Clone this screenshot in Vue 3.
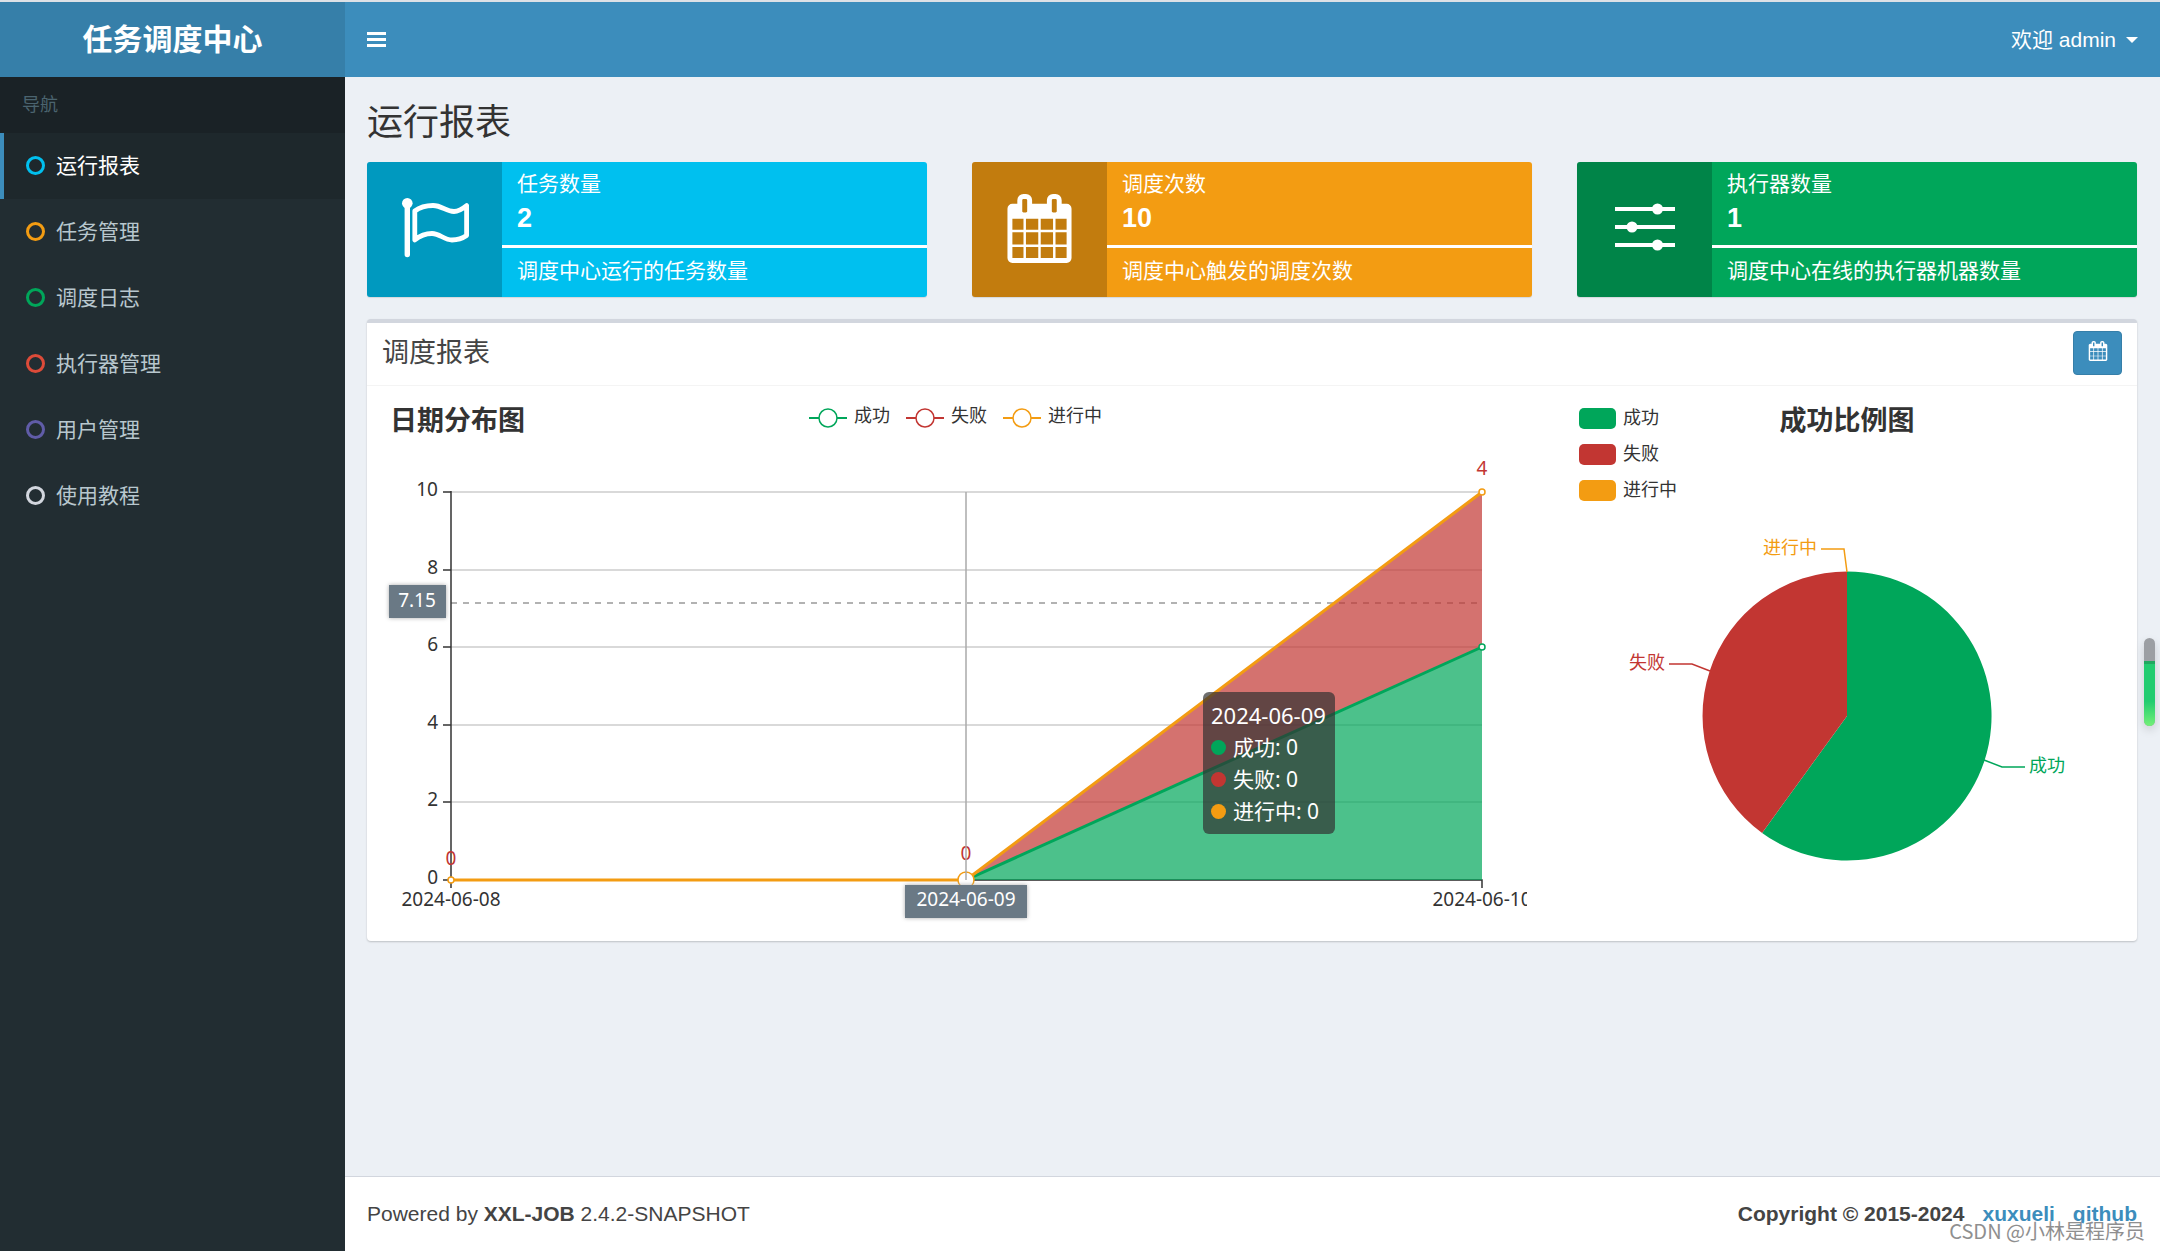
<script setup>
const menu = [
  { label: '运行报表', color: '#00c0ef', active: true },
  { label: '任务管理', color: '#f39c12' },
  { label: '调度日志', color: '#00a65a' },
  { label: '执行器管理', color: '#dd4b39' },
  { label: '用户管理', color: '#605ca8' },
  { label: '使用教程', color: '#d2d6de' },
]

const stats = [
  { kind: 'aqua', icon: 'flag', label: '任务数量', value: 2, note: '调度中心运行的任务数量' },
  { kind: 'yellow', icon: 'calendar', label: '调度次数', value: 10, note: '调度中心触发的调度次数' },
  { kind: 'green', icon: 'sliders', label: '执行器数量', value: 1, note: '调度中心在线的执行器机器数量' },
]

const series = [
  { name: '成功', color: '#00a65a', x: 427 },
  { name: '失败', color: '#c23632', x: 524 },
  { name: '进行中', color: '#f39c12', x: 621 },
]

const plot = { left: 69, mid: 584, right: 1100, top: 91, bottom: 479 }
const yOf = (v) => Math.round(plot.bottom - (v / 10) * (plot.bottom - plot.top))
const ticks = [0, 2, 4, 6, 8, 10]

const calendarPath =
  'M192 1664h288v-288h-288v288zm352 0h320v-288h-320v288zm-352-352h288v-320h-288v320zm352 0h320v-320h-320v320zm-352-384h288v-288h-288v288zm736 736h320v-288h-320v288zm-384-736h320v-288h-320v288zm768 736h288v-288h-288v288zm-384-352h320v-320h-320v320zm-352-864v-288q0-13-9.5-22.5t-22.5-9.5h-64q-13 0-22.5 9.5t-9.5 22.5v288q0 13 9.5 22.5t22.5 9.5h64q13 0 22.5-9.5t9.5-22.5zm736 864h288v-320h-288v320zm-384-384h320v-288h-320v288zm384 0h288v-288h-288v288zm32-480v-288q0-13-9.5-22.5t-22.5-9.5h-64q-13 0-22.5 9.5t-9.5 22.5v288q0 13 9.5 22.5t22.5 9.5h64q13 0 22.5-9.5t9.5-22.5zm384-64v1280q0 52-38 90t-90 38h-1408q-52 0-90-38t-38-90v-1280q0-52 38-90t90-38h128v-96q0-66 47-113t113-47h64q66 0 113 47t47 113v96h384v-96q0-66 47-113t113-47h64q66 0 113 47t47 113v96h128q52 0 90 38t38 90z'
</script>

<template>
  <div class="app">
    <header class="topbar">
      <a href="#" class="logo">任务调度中心</a>
      <nav class="navbar">
        <button class="toggle" type="button" aria-label="导航">
          <svg width="19" height="16" viewBox="0 0 19 16"><path d="M0 0h19v3H0zM0 6h19v3H0zM0 12h19v3H0z" fill="#fff" /></svg>
        </button>
        <button class="user" type="button">
          欢迎 admin
          <span class="caret"></span>
        </button>
      </nav>
    </header>

    <div class="main">
      <aside class="sidebar">
        <div class="nav-title">导航</div>
        <ul class="menu">
          <li v-for="item in menu" :key="item.label">
            <a href="#" class="menu-link" :class="{ active: item.active }">
              <svg width="19" height="19" viewBox="0 0 19 19">
                <circle cx="9.5" cy="9.5" r="8" fill="none" :stroke="item.color" stroke-width="3" />
              </svg>
              {{ item.label }}
            </a>
          </li>
        </ul>
      </aside>

      <div class="page">
        <main class="content">
          <h1>运行报表</h1>

          <section class="stats">
            <div v-for="s in stats" :key="s.kind" class="stat" :class="s.kind">
              <div class="stat-icon">
                <svg v-if="s.icon === 'flag'" width="135" height="135" viewBox="0 0 135 135">
                  <circle cx="40.3" cy="42.3" r="5.3" fill="#fff" />
                  <path d="M40.3 44V93.5" stroke="#fff" stroke-width="5.4" stroke-linecap="round" />
                  <path
                    d="M47.8 50C53 46 60 44.5 66 44.5C75 44.5 79 50.5 87 50.5C92 50.5 96 47.5 99.6 44.6V74.5C96 77 91 79 85 79C77 79 73 72.5 65 72.5C59 72.5 52 75.5 47.8 79Z"
                    fill="none" stroke="#fff" stroke-width="4.8" stroke-linejoin="round"
                  />
                </svg>
                <svg v-else-if="s.icon === 'calendar'" width="69" height="69" viewBox="0 0 1792 1792">
                  <path :d="calendarPath" fill="#fff" />
                </svg>
                <svg v-else width="135" height="135" viewBox="0 0 135 135" fill="#fff">
                  <path d="M38 46h60v4H38zM38 64h60v4H38zM38 82h60v4H38z" />
                  <circle cx="80.5" cy="48" r="5.5" />
                  <circle cx="55" cy="66" r="5.5" />
                  <circle cx="80.5" cy="84" r="5.5" />
                </svg>
              </div>
              <div class="stat-body">
                <div class="stat-label">{{ s.label }}</div>
                <div class="stat-value">{{ s.value }}</div>
                <div class="stat-rule"></div>
                <div class="stat-note">{{ s.note }}</div>
              </div>
            </div>
          </section>

          <section class="panel">
            <div class="panel-head">
              <h2>调度报表</h2>
              <button class="range" type="button" aria-label="日期">
                <svg width="20" height="20" viewBox="0 0 1792 1792"><path :d="calendarPath" fill="#fff" /></svg>
              </button>
            </div>
            <div class="panel-body">
              <div class="line-chart">
                <svg class="chart clipped" viewBox="0 0 1145 525">
                  <text class="chart-title" x="8" y="29">日期分布图</text>

                  <g v-for="s in series" :key="s.name">
                    <path :d="`M${s.x} 17h38`" :stroke="s.color" stroke-width="2" />
                    <circle :cx="s.x + 19" cy="17" r="9" fill="#fff" :stroke="s.color" stroke-width="1.5" />
                    <text :x="s.x + 45" y="21">{{ s.name }}</text>
                  </g>

                  <path v-for="t in ticks" :key="t" :d="`M${plot.left} ${yOf(t)}H${plot.right}`" stroke="#ccc" stroke-width="1.5" />
                  <path :d="`M${plot.left} 202H${plot.right}`" stroke="#999" stroke-width="1.5" stroke-dasharray="6 6" />

                  <path :d="`M${plot.left} ${plot.top - 1}V${plot.bottom + 8}M${plot.left} ${plot.bottom}H${plot.right}v8`" fill="none" stroke="#333" stroke-width="1.5" />
                  <g v-for="t in ticks" :key="t">
                    <path :d="`M${plot.left - 8} ${yOf(t)}h8`" stroke="#333" stroke-width="1.5" />
                    <text class="num" :x="plot.left - 13" :y="yOf(t) + 4" text-anchor="end">{{ t }}</text>
                  </g>

                  <path :d="`M${plot.mid} ${plot.bottom}L${plot.right} ${yOf(6)}V${plot.bottom}Z`" fill="#00a65a" fill-opacity=".7" />
                  <path :d="`M${plot.mid} ${plot.bottom}L${plot.right} ${yOf(10)}V${yOf(6)}Z`" fill="#c23632" fill-opacity=".7" />
                  <path :d="`M${plot.mid} ${plot.bottom}L${plot.right} ${yOf(6)}`" stroke="#00a65a" stroke-width="3" />
                  <path :d="`M${plot.left} ${plot.bottom}H${plot.mid}L${plot.right} ${yOf(10)}`" fill="none" stroke="#f39c12" stroke-width="3" />

                  <text class="num red" :x="plot.left" y="464" text-anchor="middle">0</text>
                  <text class="num red" :x="plot.mid" y="459" text-anchor="middle">0</text>
                  <text class="num red" :x="plot.right" y="74" text-anchor="middle">4</text>

                  <circle :cx="plot.left" :cy="plot.bottom" r="3" fill="#fff" stroke="#f39c12" stroke-width="1.5" />
                  <circle :cx="plot.mid" :cy="plot.bottom" r="8" fill="#fff" stroke="#f39c12" stroke-width="1.5" />
                  <circle :cx="plot.right" :cy="yOf(10)" r="3" fill="#fff" stroke="#f39c12" stroke-width="1.5" />
                  <circle :cx="plot.right" :cy="yOf(6)" r="3" fill="#fff" stroke="#00a65a" stroke-width="1.5" />
                  <path :d="`M${plot.mid} ${plot.top}V${plot.bottom}`" stroke="#aaa" stroke-width="1.5" />

                  <text class="num" :x="plot.left" y="505" text-anchor="middle">2024-06-08</text>
                  <text class="num" :x="plot.right" y="505" text-anchor="middle">2024-06-10</text>
                  <rect class="pointer" x="7" y="184" width="57" height="33" />
                  <text class="num white" x="35" y="206" text-anchor="middle">7.15</text>
                  <rect class="pointer" x="523" y="484" width="122" height="33" />
                  <text class="num white" :x="plot.mid" y="505" text-anchor="middle">2024-06-09</text>
                </svg>
                <div class="tip">
                  <div class="tip-date">2024-06-09</div>
                  <div v-for="s in series" :key="s.name" class="tip-row">
                    <span class="dot" :style="{ background: s.color }"></span>{{ s.name }}: 0
                  </div>
                </div>
              </div>

              <div class="pie-chart">
                <svg class="chart" viewBox="0 0 550 525">
                  <g v-for="(s, i) in series" :key="s.name">
                    <rect x="7" :y="7 + i * 36" width="37" height="21" rx="5" :fill="s.color" />
                    <text x="51" :y="23 + i * 36">{{ s.name }}</text>
                  </g>
                  <text class="chart-title" x="275" y="29" text-anchor="middle">成功比例图</text>

                  <path d="M275 315V170.5A144.5 144.5 0 1 1 190.1 431.9Z" fill="#00a65a" />
                  <path d="M275 315L190.1 431.9A144.5 144.5 0 0 1 275 170.5Z" fill="#c23632" />

                  <path d="M249 148h23l3 23" fill="none" stroke="#f39c12" stroke-width="1.5" />
                  <text class="orange" x="191" y="153">进行中</text>
                  <path d="M97 263h23l18 7" fill="none" stroke="#c23632" stroke-width="1.5" />
                  <text class="red" x="57" y="268">失败</text>
                  <path d="M412 359l18 7h23" fill="none" stroke="#00a65a" stroke-width="1.5" />
                  <text class="green" x="457" y="371">成功</text>
                </svg>
              </div>
            </div>
          </section>
        </main>

        <footer class="footer">
          <div>Powered by <b>XXL-JOB</b> 2.4.2-SNAPSHOT</div>
          <div class="links">
            <b>Copyright © 2015-2024</b>
            <a href="#">xuxueli</a>
            <a href="#">github</a>
          </div>
        </footer>
      </div>
    </div>

    <div class="gauge"><div class="gauge-fill"></div></div>
    <div class="watermark">CSDN @小林是程序员</div>
  </div>
</template>

<style>
body {
  margin: 0;
}
</style>

<style scoped>
* {
  box-sizing: border-box;
}
.app {
  position: relative;
  display: flex;
  flex-direction: column;
  min-height: 100vh;
  border-top: 2px solid #dde1e6;
  background: #ecf0f5;
  color: #444;
  font: 21px/30px 'Liberation Sans', 'Noto Sans CJK SC', sans-serif;
}
a {
  color: #3c8dbc;
  text-decoration: none;
}
button {
  font: inherit;
  cursor: pointer;
}
.topbar {
  display: flex;
  height: 75px;
}
.logo {
  display: flex;
  align-items: center;
  justify-content: center;
  width: 345px;
  background: #367fa9;
  color: #fff;
  font-size: 30px;
  font-weight: 700;
}
.navbar {
  flex: 1;
  display: flex;
  align-items: center;
  justify-content: space-between;
  padding: 0 22px;
  background: #3c8dbc;
}
.toggle,
.user {
  display: flex;
  align-items: center;
  gap: 10px;
  padding: 0;
  border: 0;
  background: none;
  color: #fff;
}
.caret {
  border: 6px solid transparent;
  border-top-color: #fff;
  border-bottom: 0;
}
.main {
  flex: 1;
  display: flex;
}
.sidebar {
  width: 345px;
  background: #222d32;
}
.nav-title {
  padding: 13px 22px;
  background: #1a2226;
  color: #4b646f;
  font-size: 18px;
}
.menu {
  margin: 0;
  padding: 0;
  list-style: none;
}
.menu-link {
  display: flex;
  align-items: center;
  gap: 11px;
  height: 66px;
  padding: 0 22px 1px;
  border-left: 4px solid transparent;
  color: #b8c7ce;
}
.menu-link.active {
  border-left-color: #3c8dbc;
  background: #1e282c;
  color: #fff;
}
.page {
  flex: 1;
  display: flex;
  flex-direction: column;
}
.content {
  flex: 1;
  padding: 23px 23px 0 22px;
}
h1 {
  margin: 0 0 17px;
  color: #333;
  font-size: 36px;
  font-weight: 400;
  line-height: 45px;
}
.stats {
  display: grid;
  grid-template-columns: repeat(3, 1fr);
  gap: 45px;
  margin-bottom: 22px;
}
.stat {
  display: flex;
  height: 135px;
  border-radius: 3px;
  overflow: hidden;
  color: #fff;
  box-shadow: 0 1px 1px rgba(0, 0, 0, 0.1);
}
.stat-icon {
  display: flex;
  align-items: center;
  justify-content: center;
  width: 135px;
  padding-bottom: 2px;
  background: rgba(0, 0, 0, 0.2);
}
.stat-body {
  flex: 1;
  padding-top: 7px;
}
.stat-label,
.stat-value,
.stat-note {
  padding: 0 15px;
}
.stat-value {
  font-size: 27px;
  font-weight: 700;
  line-height: 38px;
}
.stat-rule {
  height: 3px;
  margin: 8px 0;
  background: #fff;
}
.aqua {
  background: #00c0ef;
}
.yellow {
  background: #f39c12;
}
.stat.green {
  background: #00a65a;
}
.panel {
  border-top: 4px solid #d2d6de;
  border-radius: 4px;
  background: #fff;
  box-shadow: 0 1px 2px rgba(0, 0, 0, 0.2);
}
.panel-head {
  display: flex;
  align-items: center;
  justify-content: space-between;
  height: 63px;
  padding: 0 15px 2px;
  border-bottom: 1px solid #f4f4f4;
}
h2 {
  margin: 0;
  font-size: 27px;
  font-weight: 400;
}
.range {
  display: flex;
  align-items: center;
  justify-content: center;
  width: 49px;
  height: 44px;
  padding: 0 0 4px;
  border: 1px solid #367fa9;
  border-radius: 4px;
  background: #3c8dbc;
}
.panel-body {
  display: grid;
  grid-template-columns: 1145fr 550fr;
  gap: 45px;
  padding: 15px;
}
.line-chart {
  position: relative;
}
.chart {
  display: block;
  width: 100%;
  overflow: visible;
  font-size: 18px;
  font-family: 'Noto Sans CJK SC', sans-serif;
}
/* The last date label is cut at the right edge of the canvas. */
.clipped {
  clip-path: inset(-8px 0 0 0);
}
text {
  fill: #333;
}
.chart-title {
  font-size: 27px;
  font-weight: 700;
}
.num {
  font-family: 'Noto Sans', sans-serif;
  font-size: 19px;
}
text.white {
  fill: #fff;
}
text.red {
  fill: #c23632;
}
text.orange {
  fill: #f39c12;
}
text.green {
  fill: #00a65a;
}
.pointer {
  fill: #6a7985;
  filter: drop-shadow(0 0 2px #aaa);
}
.tip {
  position: absolute;
  top: 291px;
  left: 821px;
  width: 132px;
  padding: 7px 8px;
  border-radius: 6px;
  background: rgba(50, 50, 50, 0.7);
  color: #fff;
  font-family: 'Noto Sans', 'Noto Sans CJK SC', sans-serif;
  line-height: 32px;
  white-space: nowrap;
}
.tip-date {
  font-size: 22px;
}
.tip-row {
  display: flex;
  align-items: center;
}
.dot {
  width: 15px;
  height: 15px;
  margin-right: 7px;
  border-radius: 50%;
}
.footer {
  display: flex;
  justify-content: space-between;
  padding: 22px 23px 22px 22px;
  border-top: 1px solid #d2d6de;
  background: #fff;
}
.links {
  display: flex;
  gap: 18px;
  font-weight: 700;
}
.gauge {
  position: absolute;
  top: 636px;
  right: 5px;
  display: flex;
  align-items: flex-end;
  width: 11px;
  height: 88px;
  border-radius: 6px;
  overflow: hidden;
  background: #9c9fa3;
  box-shadow: 0 4px 10px rgba(0, 0, 0, 0.15);
}
.gauge-fill {
  width: 100%;
  height: 65px;
  border-top: 3px solid #20a860;
  background: linear-gradient(#22cc70 60%, #74f078);
}
.watermark {
  position: absolute;
  right: 15px;
  bottom: 5px;
  color: #8f8f8f;
  font-family: 'Noto Sans CJK SC', sans-serif;
  font-size: 20px;
  text-shadow: 1px 1px 0 #fff;
}
</style>
